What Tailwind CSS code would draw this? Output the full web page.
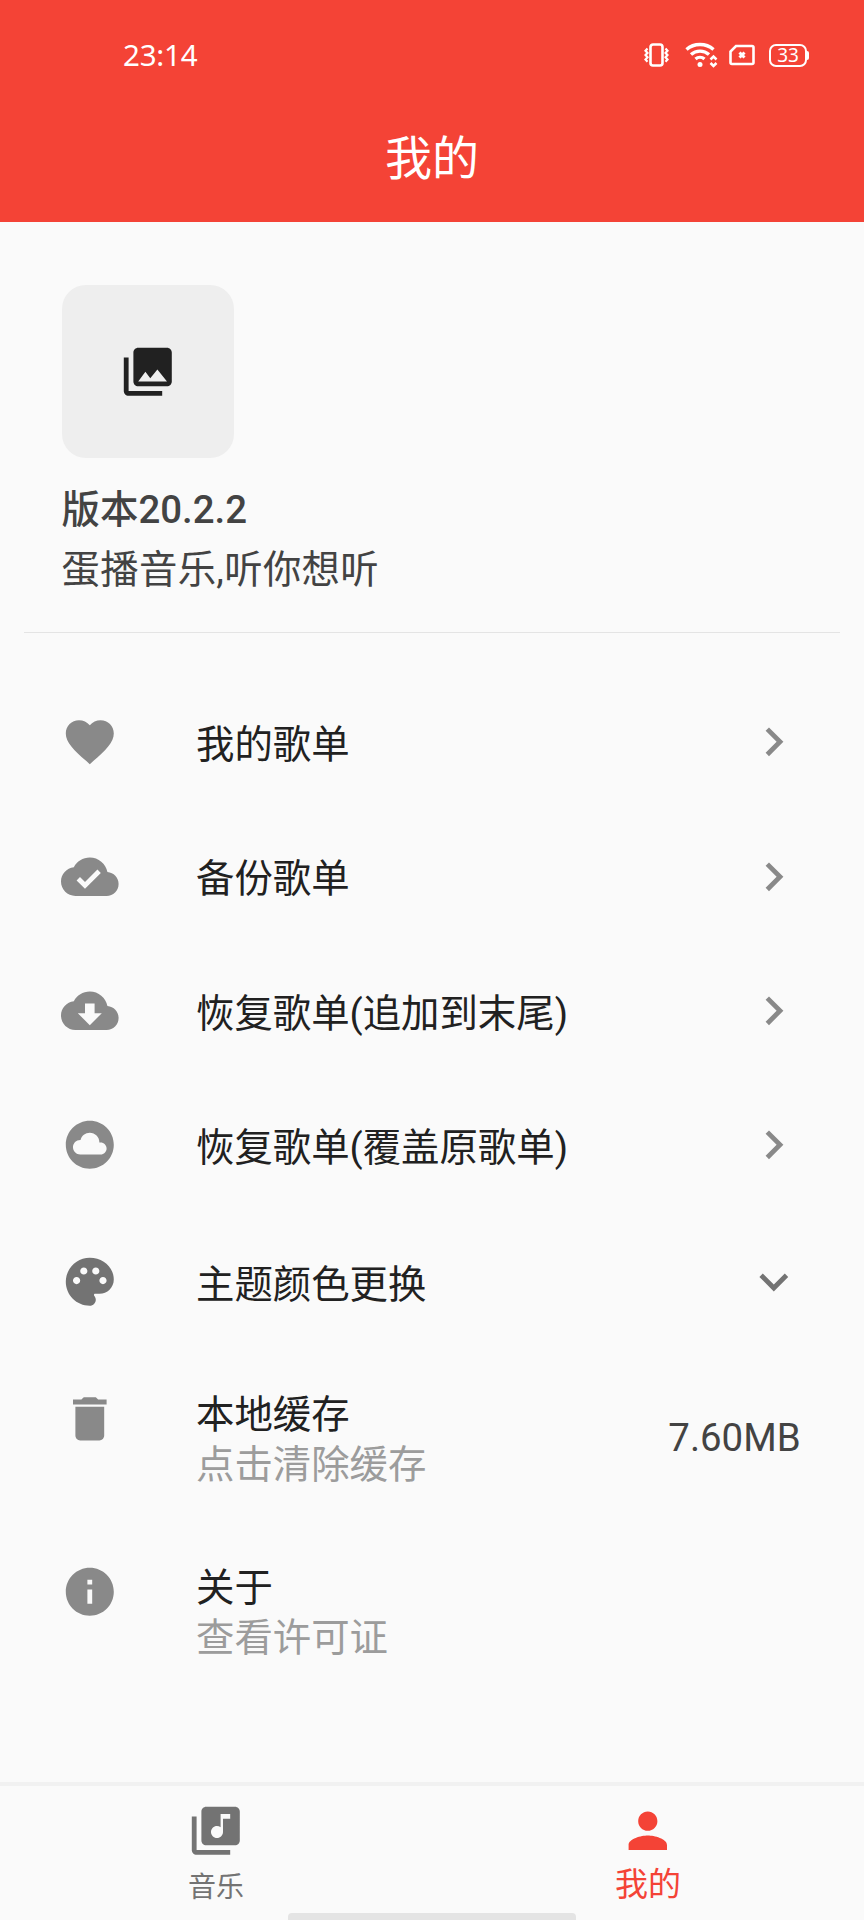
<!DOCTYPE html>
<html lang="zh-CN">
  <head>
    <meta charset="UTF-8" />
    <meta name="viewport" content="width=device-width, initial-scale=1.0" />
    <title>我的</title>
    <script src="https://cdn.jsdelivr.net/npm/@tailwindcss/browser@4"></script>
  </head>
  <body class="bg-[#fafafa] font-['Roboto','Noto_Sans_CJK_SC',sans-serif]">
    <div class="relative flex flex-col w-[864px] h-[1920px] overflow-hidden text-[38.4px] leading-[50px] text-[#212121]">
      <!-- Header -->
      <header class="h-[222px] shrink-0 bg-[#f44336] text-white">
        <div class="h-[110px] flex items-center justify-between pl-[123px] pr-[55px]">
          <span class="font-['Noto_Sans',sans-serif] text-[29.5px] leading-none tracking-[-0.2px]">23:14</span>
          <div class="flex items-center">
            <svg class="w-[26px] h-[24px] mr-[15px]" viewBox="0 0 26 24" fill="none" stroke="currentColor" stroke-width="2.6">
              <rect x="6.500" y="1.500" width="12" height="21" rx="2.500" />
              <path d="M3.500 5.500l-2 2.200 2 2.200-2 2.200 2 2.200-2 2.200 2 2.200M21.500 5.500l2 2.200-2 2.200 2 2.200-2 2.200 2 2.200-2 2.200" stroke-width="2.200" />
            </svg>
            <svg class="w-[33px] h-[26px] mr-[11px]" viewBox="0 0 33 26" fill="none" stroke="currentColor" stroke-width="3.4">
              <path d="M1.500 7.500C9 .800 21 .800 28.500 7.500M6 12.500c5-4.500 13-4.500 18 0M10.500 17c2.600-2.200 6.400-2.200 9 0" />
              <circle cx="15" cy="22.500" r="2.500" fill="currentColor" stroke="none" />
              <path d="M25.500 17.500l3-3 3 3M25.500 21l3 3 3-3" stroke-width="2.500" />
            </svg>
            <svg class="w-[26px] h-[22px] mr-[14px]" viewBox="0 0 26 22" fill="none" stroke="currentColor" stroke-width="2.6">
              <path d="M7 2h16a1.500 1.500 0 0 1 1.500 1.500v15A1.500 1.500 0 0 1 23 20H3a1.500 1.500 0 0 1-1.500-1.500V7.500z" />
              <path d="M10.500 8.500l5 5M15.500 8.500l-5 5" stroke-width="3" />
            </svg>
            <div class="flex items-center">
              <div class="w-[38px] h-[23px] rounded-[7px] border-[2.5px] border-white flex items-center justify-center font-['Noto_Sans',sans-serif] text-[19px] leading-none">33</div>
              <div class="w-[2px] h-[9px] bg-white rounded-r"></div>
            </div>
          </div>
        </div>
        <h1 class="pt-[17px] text-center text-[47px] leading-[64px]">我的</h1>
      </header>

      <!-- Profile -->
      <section class="h-[410px] shrink-0 pt-[63px] pl-[61.6px] text-[#434343]">
        <div class="w-[172.8px] h-[172.8px] rounded-[24px] bg-[#eeeeee] text-[#212121] flex items-center justify-center">
          <svg class="w-[57.6px] h-[57.6px]" viewBox="0 0 24 24" fill="currentColor">
            <path d="M22 16V4c0-1.100-.9-2-2-2H8c-1.100 0-2 .9-2 2v12c0 1.100.9 2 2 2h12c1.100 0 2-.9 2-2zm-11-4l2.030 2.710L16 11l4 5H8l3-4zM2 6v14c0 1.100.9 2 2 2h14v-2H4V6H2z" />
          </svg>
        </div>
        <p class="mt-[27px] font-medium">版本20.2.2</p>
        <p class="mt-[10px] tracking-[0.3px]">蛋播音乐,听你想听</p>
      </section>
      <div class="mx-6 h-px shrink-0 bg-[#e4e4e4]"></div>

      <!-- Menu -->
      <ul class="pt-[41.8px] grow">
        <li class="h-[134.4px] flex items-center pl-[61.4px] pr-[61.6px]">
          <svg class="w-[57.6px] h-[57.6px] text-[#898989]" viewBox="0 0 24 24" fill="currentColor">
            <path d="M12 21.350l-1.450-1.320C5.400 15.360 2 12.280 2 8.500 2 5.420 4.420 3 7.500 3c1.740 0 3.410.81 4.500 2.090C13.090 3.810 14.760 3 16.500 3 19.580 3 22 5.420 22 8.500c0 3.780-3.400 6.860-8.550 11.540L12 21.350z" />
          </svg>
          <span class="ml-[77px] pt-[6px] grow">我的歌单</span>
          <svg class="w-[57.6px] h-[57.6px] text-[#898989]" viewBox="0 0 24 24" fill="currentColor">
            <path d="M10 6L8.590 7.410 13.170 12l-4.580 4.590L10 18l6-6z" />
          </svg>
        </li>
        <li class="h-[134.4px] flex items-center pl-[61.4px] pr-[61.6px]">
          <svg class="w-[57.6px] h-[57.6px] text-[#898989]" viewBox="0 0 24 24" fill="currentColor">
            <path d="M19.350 10.040C18.670 6.590 15.640 4 12 4 9.110 4 6.600 5.640 5.350 8.040 2.340 8.360 0 10.910 0 14c0 3.310 2.690 6 6 6h13c2.760 0 5-2.240 5-5 0-2.640-2.050-4.780-4.650-4.960zM10 17l-3.500-3.500 1.410-1.410L10 14.170 15.180 9l1.410 1.410L10 17z" />
          </svg>
          <span class="ml-[77px] pt-[6px] grow">备份歌单</span>
          <svg class="w-[57.6px] h-[57.6px] text-[#898989]" viewBox="0 0 24 24" fill="currentColor">
            <path d="M10 6L8.590 7.410 13.170 12l-4.580 4.590L10 18l6-6z" />
          </svg>
        </li>
        <li class="h-[134.4px] flex items-center pl-[61.4px] pr-[61.6px]">
          <svg class="w-[57.6px] h-[57.6px] text-[#898989]" viewBox="0 0 24 24" fill="currentColor">
            <path d="M19.350 10.040C18.670 6.590 15.640 4 12 4 9.110 4 6.600 5.640 5.350 8.040 2.340 8.360 0 10.910 0 14c0 3.310 2.690 6 6 6h13c2.760 0 5-2.240 5-5 0-2.640-2.050-4.780-4.650-4.960zM17 13l-5 5-5-5h3V9h4v4h3z" />
          </svg>
          <span class="ml-[77px] pt-[6px] grow">恢复歌单(追加到末尾)</span>
          <svg class="w-[57.6px] h-[57.6px] text-[#898989]" viewBox="0 0 24 24" fill="currentColor">
            <path d="M10 6L8.590 7.410 13.170 12l-4.580 4.590L10 18l6-6z" />
          </svg>
        </li>
        <li class="h-[134.4px] flex items-center pl-[61.4px] pr-[61.6px]">
          <svg class="w-[57.6px] h-[57.6px] text-[#898989]" viewBox="0 0 24 24" fill="currentColor">
            <path d="M12 2C6.480 2 2 6.480 2 12s4.480 10 10 10 10-4.480 10-10S17.520 2 12 2zm4.500 14H8c-1.660 0-3-1.340-3-3s1.340-3 3-3l.14.010C8.580 8.280 10.130 7 12 7c2.210 0 4 1.790 4 4h.5c1.380 0 2.500 1.120 2.500 2.500S17.880 16 16.500 16z" />
          </svg>
          <span class="ml-[77px] pt-[6px] grow">恢复歌单(覆盖原歌单)</span>
          <svg class="w-[57.6px] h-[57.6px] text-[#898989]" viewBox="0 0 24 24" fill="currentColor">
            <path d="M10 6L8.590 7.410 13.170 12l-4.580 4.590L10 18l6-6z" />
          </svg>
        </li>
        <li class="mt-[2.4px] h-[134.4px] flex items-center pl-[61.4px] pr-[61.6px]">
          <svg class="w-[57.6px] h-[57.6px] text-[#737373]" viewBox="0 0 24 24" fill="currentColor">
            <path d="M12 2C6.490 2 2 6.490 2 12s4.490 10 10 10c1.380 0 2.500-1.120 2.500-2.500 0-.61-.23-1.200-.64-1.670-.08-.1-.13-.21-.13-.33 0-.28.22-.5.5-.5H16c3.310 0 6-2.690 6-6 0-4.960-4.490-9-10-9zM6.500 13c-.83 0-1.500-.67-1.500-1.500S5.670 10 6.500 10 8 10.670 8 11.500 7.330 13 6.500 13zm3-4C8.670 9 8 8.330 8 7.500S8.670 6 9.500 6s1.500.67 1.500 1.500S10.330 9 9.500 9zm5 0c-.83 0-1.500-.67-1.500-1.500S13.670 6 14.500 6s1.500.67 1.500 1.500S15.330 9 14.500 9zm3 4c-.83 0-1.500-.67-1.500-1.500s.67-1.500 1.500-1.500 1.500.67 1.500 1.500-.67 1.500-1.500 1.500z" />
          </svg>
          <span class="ml-[77px] pt-[6px] grow">主题颜色更换</span>
          <svg class="w-[57.6px] h-[57.6px] text-[#737373]" viewBox="0 0 24 24" fill="currentColor">
            <path d="M16.590 8.590L12 13.170 7.410 8.590 6 10l6 6 6-6z" />
          </svg>
        </li>
        <li class="mt-[2.4px] h-[172.8px] flex items-center pl-[61.4px] pr-[63.4px]">
          <svg class="w-[57.6px] h-[57.6px] mb-[38.4px] text-[#898989]" viewBox="0 0 24 24" fill="currentColor">
            <path d="M6 19c0 1.100.9 2 2 2h8c1.100 0 2-.9 2-2V7H6v12zM19 4h-3.500l-1-1h-5l-1 1H5v2h14V4z" />
          </svg>
          <div class="ml-[77px] pt-[5px] grow">
            <p>本地缓存</p>
            <p class="text-[#9c9c9c]">点击清除缓存</p>
          </div>
          <span class="text-[#434343]">7.60MB</span>
        </li>
        <li class="h-[172.8px] flex items-center pl-[61.4px] pr-[61.6px]">
          <svg class="w-[57.6px] h-[57.6px] mb-[38.4px] text-[#898989]" viewBox="0 0 24 24" fill="currentColor">
            <path d="M12 2C6.480 2 2 6.480 2 12s4.480 10 10 10 10-4.480 10-10S17.520 2 12 2zm1 15h-2v-6h2v6zm0-8h-2V7h2v2z" />
          </svg>
          <div class="ml-[77px] pt-[5px] grow">
            <p>关于</p>
            <p class="text-[#9c9c9c]">查看许可证</p>
          </div>
        </li>
      </ul>

      <!-- Bottom navigation -->
      <nav class="h-[138px] shrink-0 border-t-4 border-[#f1f1f1] grid grid-cols-2">
        <a class="flex flex-col items-center pt-[16px] text-[#737373]">
          <svg class="w-[57.6px] h-[57.6px]" viewBox="0 0 24 24" fill="currentColor">
            <path d="M20 2H8c-1.100 0-2 .9-2 2v12c0 1.100.9 2 2 2h12c1.100 0 2-.9 2-2V4c0-1.100-.9-2-2-2zm-2 5h-3v5.500c0 1.380-1.120 2.500-2.500 2.500S10 13.880 10 12.500s1.120-2.500 2.500-2.500c.57 0 1.080.19 1.500.51V5h4v2zM4 6H2v14c0 1.100.9 2 2 2h14v-2H4V6z" />
          </svg>
          <span class="mt-[8px] text-[28px] leading-[40px]">音乐</span>
        </a>
        <a class="flex flex-col items-center pt-[16px] text-[#f44336]">
          <svg class="w-[57.6px] h-[57.6px]" viewBox="0 0 24 24" fill="currentColor">
            <path d="M12 12c2.210 0 4-1.790 4-4s-1.790-4-4-4-4 1.790-4 4 1.790 4 4 4zm0 2c-2.670 0-8 1.340-8 4v2h16v-2c0-2.660-5.330-4-8-4z" />
          </svg>
          <span class="mt-[5px] text-[33px] leading-[40px]">我的</span>
        </a>
      </nav>

      <!-- Gesture bar -->
      <div class="absolute bottom-0 left-[288px] w-[288px] h-[7px] rounded-t bg-[#e4e4e4]"></div>
    </div>
  </body>
</html>
